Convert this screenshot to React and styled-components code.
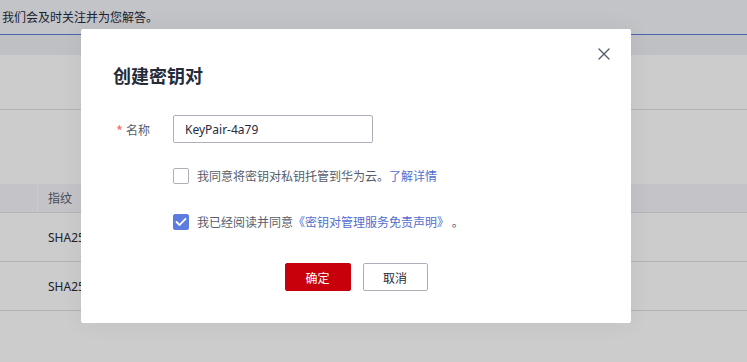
import React from "react";
import styled, { createGlobalStyle } from "styled-components";

const Global = createGlobalStyle`
  html, body { margin: 0; padding: 0; background: #ffffff; }
  body { font-family: "Noto Sans", "Noto Sans CJK SC", sans-serif; }
  #root { width: 747px; height: 362px; overflow: hidden; }
`;

const Page = styled.div`
  position: relative;
  width: 747px;
  height: 362px;
  overflow: hidden;
  background: #ffffff;
  display: flex;
  flex-direction: column;
`;

const Banner = styled.div`
  height: 34px;
  background: #f4f5fa;
  border-bottom: 1px solid #5e7ce0;
  display: flex;
  align-items: center;
  padding-left: 2px;
  font-size: 12px;
  color: #252b3a;
`;

const TabBand = styled.div`
  height: 20px;
  background: #eff0f5;
`;

const Section = styled.div`
  height: ${(p) => p.$h}px;
  border-bottom: ${(p) => (p.$line ? "1px solid #dfe1e6" : "none")};
`;

const Table = styled.div`
  display: flex;
  flex-direction: column;
`;

const Row = styled.div`
  display: grid;
  grid-template-columns: 38px 1fr;
  height: ${(p) => (p.$head ? 28 : 48)}px;
  background: ${(p) => (p.$head ? "#f5f6fa" : "#ffffff")};
  border-bottom: 1px solid #dfe1e6;
  font-size: 12px;
  color: ${(p) => (p.$head ? "#575d6c" : "#252b3a")};
`;

const Cell = styled.div`
  display: flex;
  align-items: center;
  padding-left: ${(p) => (p.$first ? 0 : 10)}px;
  border-right: ${(p) => (p.$divider ? "1px solid #ffffff" : "none")};
  white-space: nowrap;
`;

const Overlay = styled.div`
  position: absolute;
  inset: 0;
  background: rgba(0, 0, 0, 0.2);
`;

const Modal = styled.div`
  position: absolute;
  left: 81px;
  top: 29px;
  width: 550px;
  box-sizing: border-box;
  padding: 34px 32px 32px 32px;
  background: #ffffff;
  border-radius: 2px;
  box-shadow: 0 0 24px rgba(0, 0, 0, 0.06);
  display: flex;
  flex-direction: column;
`;

const Close = styled.button`
  position: absolute;
  right: 20px;
  top: 18px;
  width: 14px;
  height: 14px;
  padding: 0;
  border: none;
  background: transparent;
  display: flex;
  align-items: center;
  justify-content: center;
  cursor: pointer;
`;

const Title = styled.h2`
  margin: 0;
  font-size: 18px;
  line-height: 24px;
  font-weight: 700;
  color: #252b3a;
  font-family: "Noto Sans CJK SC", sans-serif;
`;

const FormRow = styled.div`
  display: flex;
  align-items: center;
  margin-top: 28px;
`;

const Label = styled.label`
  width: 57px;
  padding-left: 3px;
  font-size: 12px;
  color: #575d6c;
  display: flex;
  align-items: center;
  gap: 3px;
  font-family: "Noto Sans CJK SC", sans-serif;
`;

const Star = styled.span`
  color: #f66f6a;
  font-size: 15px;
  line-height: 12px;
  padding-top: 3px;
`;

const Input = styled.input`
  width: 200px;
  height: 28px;
  box-sizing: border-box;
  border: 1px solid #adb0b8;
  border-radius: 2px;
  padding: 0 11px;
  font-size: 12px;
  color: #252b3a;
  font-family: "Noto Sans", "Noto Sans CJK SC", sans-serif;
  outline: none;
`;

const CheckRow = styled.div`
  display: flex;
  align-items: center;
  gap: 8px;
  margin-left: 60px;
  margin-top: ${(p) => p.$mt}px;
  font-size: 12px;
  line-height: 16px;
  color: #575d6c;
  font-family: "Noto Sans CJK SC", sans-serif;
`;

const Box = styled.span`
  width: 16px;
  height: 16px;
  box-sizing: border-box;
  border-radius: 2px;
  border: 1px solid ${(p) => (p.$checked ? "#5e7ce0" : "#adb0b8")};
  background: ${(p) => (p.$checked ? "#5e7ce0" : "#ffffff")};
  display: flex;
  align-items: center;
  justify-content: center;
  flex-shrink: 0;
`;

const Link = styled.a`
  color: #526ecc;
  text-decoration: none;
`;

const Actions = styled.div`
  display: flex;
  justify-content: center;
  gap: 12px;
  margin-top: 33px;
`;

const Button = styled.button`
  height: 28px;
  width: ${(p) => p.$w}px;
  box-sizing: border-box;
  border-radius: 2px;
  font-size: 12px;
  font-family: "Noto Sans CJK SC", sans-serif;
  border: 1px solid ${(p) => (p.$primary ? "#c7000b" : "#adb0b8")};
  background: ${(p) => (p.$primary ? "#c7000b" : "#ffffff")};
  color: ${(p) => (p.$primary ? "#ffffff" : "#252b3a")};
  padding: 0;
  cursor: pointer;
`;

export default function App() {
  return (
    <>
      <Global />
      <Page>
        <Banner>我们会及时关注并为您解答。</Banner>
        <TabBand />
        <Section $h={54} $line />
        <Section $h={74} />
        <Table>
          <Row $head>
            <Cell $first $divider />
            <Cell>指纹</Cell>
          </Row>
          <Row>
            <Cell $first />
            <Cell>SHA256:5c:1f:8a:20:9d</Cell>
          </Row>
          <Row>
            <Cell $first />
            <Cell>SHA256:7e:03:b4:61:2a</Cell>
          </Row>
        </Table>
        <Overlay />
        <Modal>
          <Close aria-label="关闭">
            <svg width="12" height="12" viewBox="0 0 12 12">
              <path d="M1 1L11 11M11 1L1 11" stroke="#575d6c" strokeWidth="1.4" strokeLinecap="round" />
            </svg>
          </Close>
          <Title>创建密钥对</Title>
          <FormRow>
            <Label>
              <Star>*</Star>名称
            </Label>
            <Input defaultValue="KeyPair-4a79" />
          </FormRow>
          <CheckRow $mt={25}>
            <Box />
            <span>
              我同意将密钥对私钥托管到华为云。<Link href="#">了解详情</Link>
            </span>
          </CheckRow>
          <CheckRow $mt={30}>
            <Box $checked>
              <svg width="12" height="10" viewBox="0 0 12 10">
                <path d="M1.5 5L4.6 8L10.5 1.8" stroke="#ffffff" strokeWidth="1.8" fill="none" strokeLinecap="round" strokeLinejoin="round" />
              </svg>
            </Box>
            <span>
              我已经阅读并同意<Link href="#">《密钥对管理服务免责声明》</Link> 。
            </span>
          </CheckRow>
          <Actions>
            <Button $primary $w={66}>确定</Button>
            <Button $w={65}>取消</Button>
          </Actions>
        </Modal>
      </Page>
    </>
  );
}
